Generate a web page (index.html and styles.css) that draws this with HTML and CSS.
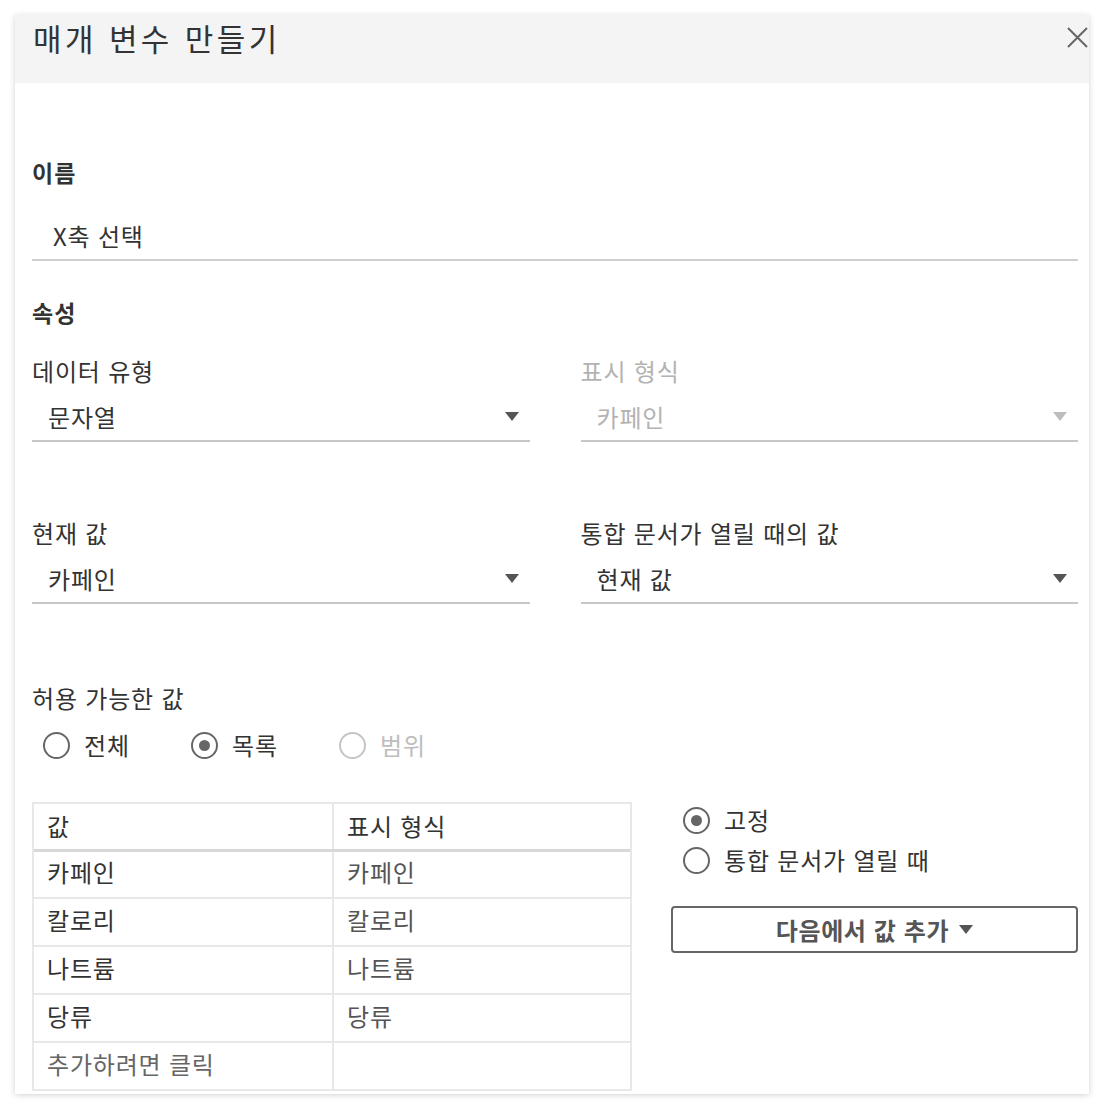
FILE: index.html
```html
<!DOCTYPE html>
<html lang="ko">
<head>
<meta charset="utf-8">
<link rel="stylesheet" href="styles.css">
</head>
<body>
<div class="dialog">
  <div class="header">
    <h1 class="title">매개 변수 만들기</h1>
    <button class="close" aria-label="닫기">
      <svg width="21" height="21" viewBox="0 0 21 21"><path d="M1 1 L20 20 M20 1 L1 20" stroke="#666" stroke-width="2" fill="none"/></svg>
    </button>
  </div>
  <div class="content">
    <div class="section-label name-label">이름</div>
    <div class="text-input">X축 선택</div>

    <div class="section-label props-label">속성</div>
    <div class="grid first-grid">
      <div class="field">
        <div class="field-label">데이터 유형</div>
        <div class="select"><span>문자열</span><i class="arrow"></i></div>
      </div>
      <div class="field disabled">
        <div class="field-label">표시 형식</div>
        <div class="select"><span>카페인</span><i class="arrow"></i></div>
      </div>
    </div>
    <div class="grid second-grid">
      <div class="field">
        <div class="field-label">현재 값</div>
        <div class="select"><span>카페인</span><i class="arrow"></i></div>
      </div>
      <div class="field">
        <div class="field-label">통합 문서가 열릴 때의 값</div>
        <div class="select"><span>현재 값</span><i class="arrow"></i></div>
      </div>
    </div>

    <div class="field-label allowed-label">허용 가능한 값</div>
    <div class="radio-row">
      <label class="radio"><i class="dot"></i><span>전체</span></label>
      <label class="radio checked"><i class="dot"></i><span>목록</span></label>
      <label class="radio disabled"><i class="dot"></i><span>범위</span></label>
    </div>

    <div class="list-area">
      <div class="table">
        <div class="row head"><div class="cell">값</div><div class="cell">표시 형식</div></div>
        <div class="row"><div class="cell">카페인</div><div class="cell alias">카페인</div></div>
        <div class="row"><div class="cell">칼로리</div><div class="cell alias">칼로리</div></div>
        <div class="row"><div class="cell">나트륨</div><div class="cell alias">나트륨</div></div>
        <div class="row"><div class="cell">당류</div><div class="cell alias">당류</div></div>
        <div class="row last"><div class="cell hint">추가하려면 클릭</div><div class="cell"></div></div>
      </div>
      <div class="side">
        <label class="radio checked"><i class="dot"></i><span>고정</span></label>
        <label class="radio"><i class="dot"></i><span>통합 문서가 열릴 때</span></label>
        <button class="add-btn"><span>다음에서 값 추가</span><i class="arrow"></i></button>
      </div>
    </div>
  </div>
</div>
</body>
</html>
```
FILE: styles.css
```css
* { box-sizing: border-box; }
html, body { margin: 0; padding: 0; background: #fff; }
body {
  font-family: "Noto Sans CJK KR", "Noto Sans", sans-serif;
  color: #333;
  letter-spacing: 0.8px;
  padding: 15px;
}
.dialog {
  width: 1074px;
  height: 1079px;
  background: #fff;
  box-shadow: 0 1px 6px rgba(0,0,0,0.18);
  overflow: hidden;
}
.header {
  height: 68px;
  background: #f4f4f4;
  display: flex;
  justify-content: space-between;
  align-items: flex-start;
  padding-left: 18px;
}
.title {
  margin: 0;
  margin-top: 3px;
  font-weight: 400;
  font-size: 31px;
  line-height: 40px;
  letter-spacing: 3.4px;
  color: #333;
}
.close {
  border: 0;
  background: none;
  padding: 0;
  margin: 12px 1px 0 0;
  width: 21px;
  height: 21px;
  display: block;
}
.close svg { display: block; }
.content {
  padding: 0 11px 0 17px;
}
.section-label {
  font-size: 23px;
  font-weight: 700;
  line-height: 30px;
  letter-spacing: 1px;
}
.name-label { margin-top: 74px; }
.text-input {
  margin-top: 26px;
  height: 48px;
  padding-left: 21px;
  font-size: 24px;
  line-height: 46px;
  border-bottom: 2px solid #cfcfcf;
}
.props-label { margin-top: 36px; }
.grid {
  display: grid;
  grid-template-columns: 1fr 1fr;
  column-gap: 51px;
}
.first-grid { margin-top: 29px; }
.second-grid { margin-top: 76px; }
.field-label {
  font-size: 24px;
  line-height: 30px;
}
.select {
  margin-top: 9px;
  height: 47px;
  border-bottom: 2px solid #c8c8c8;
  display: flex;
  align-items: center;
  justify-content: space-between;
  padding: 0 11px 2px 16px;
  font-size: 24px;
}
.arrow {
  display: inline-block;
  width: 0;
  height: 0;
  border-left: 7px solid transparent;
  border-right: 7px solid transparent;
  border-top: 9px solid #555;
}
.field.disabled .field-label,
.field.disabled .select { color: #b3b3b3; }
.field.disabled .arrow { border-top-color: #bdbdbd; }
.allowed-label { margin-top: 79px; }
.radio-row {
  margin-top: 17px;
  display: flex;
  padding-left: 11px;
}
.radio {
  display: flex;
  align-items: center;
  font-size: 24px;
  line-height: 30px;
  height: 30px;
}
.radio .dot {
  width: 27px;
  height: 27px;
  border: 2px solid #666;
  border-radius: 50%;
  display: flex;
  align-items: center;
  justify-content: center;
  margin-right: 14px;
  flex: none;
}
.radio.checked .dot::after {
  content: "";
  width: 11px;
  height: 11px;
  border-radius: 50%;
  background: #666;
}
.radio-row .radio { width: 148px; }
.radio.disabled { color: #bdbdbd; }
.radio.disabled .dot { border-color: #c4c4c4; }
.list-area {
  margin-top: 42px;
  display: flex;
  align-items: flex-start;
}
.table {
  width: 600px;
  border: 2px solid #e8e8e8;
}
.row {
  display: grid;
  grid-template-columns: 298px 1fr;
  height: 48px;
  border-top: 2px solid #e8e8e8;
}
.row.head { border-top: 0; height: 46px; border-bottom: 1px solid #d8d8d8; }
.row.head + .row { border-top: 2px solid #d8d8d8; height: 47px; }
.cell {
  padding-left: 13px;
  padding-bottom: 5px;
  font-size: 24px;
  display: flex;
  align-items: center;
}
.row.head .cell { padding-bottom: 3px; }
.row.head + .row .cell { padding-bottom: 7px; }
.cell + .cell { border-left: 2px solid #e8e8e8; }
.cell.alias { color: #555; }
.cell.hint { color: #666; }
.side {
  margin-left: 39px;
  width: 407px;
  display: flex;
  flex-direction: column;
  margin-top: -2px;
}
.side .radio { margin-left: 12px; height: 40px; }
.add-btn {
  margin-top: 26px;
  height: 47px;
  width: 407px;
  border: 2px solid #666;
  border-radius: 4px;
  background: #fff;
  font-family: inherit;
  font-size: 24px;
  font-weight: 700;
  letter-spacing: 0.6px;
  color: #555;
  display: flex;
  align-items: center;
  justify-content: center;
  padding: 0;
}
.add-btn .arrow { margin-left: 10px; border-top-color: #555; }
```
